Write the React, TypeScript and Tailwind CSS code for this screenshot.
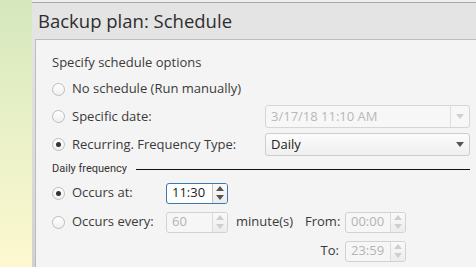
import React from "react";

const font = { fontFamily: '"Open Sans", "DejaVu Sans", sans-serif' };

function Radio({ checked }: { checked?: boolean }) {
  return (
    <span className="flex h-[13px] w-[13px] shrink-0 items-center justify-center rounded-full border border-[#bdbdbd] bg-gradient-to-b from-white to-[#efefef]">
      {checked && <span className="h-[5px] w-[5px] rounded-full bg-[#333]" />}
    </span>
  );
}

function Arrow({ up, color }: { up?: boolean; color: string }) {
  return (
    <svg width="8" height="5" viewBox="0 0 8 5" className="block">
      <path d={up ? "M0 5 L4 0 L8 5 Z" : "M0 0 L8 0 L4 5 Z"} fill={color} />
    </svg>
  );
}

function Spin({
  value,
  disabled,
  focused,
  width = "w-[62px]",
}: {
  value: string;
  disabled?: boolean;
  focused?: boolean;
  width?: string;
}) {
  const arrow = disabled ? "#cfcfcf" : "#555";
  return (
    <div
      className={`flex h-[21px] ${width} rounded-[3px] border ${
        focused ? "border-[#3a78ad]" : "border-[#d2d2d2]"
      } ${disabled ? "bg-[#f6f6f6]" : "bg-white"}`}
    >
      <div
        className={`flex flex-1 items-center pl-[5px] text-[13px] ${
          disabled ? "text-[#b4b4b4]" : "text-[#222]"
        }`}
      >
        {value}
      </div>
      <div
        className={`flex w-[15px] flex-col border-l ${
          focused ? "border-[#c4c4c4]" : "border-[#dcdcdc]"
        } bg-gradient-to-b from-[#fafafa] to-[#ececec] rounded-r-[2px]`}
      >
        <div className="flex flex-1 items-center justify-center">
          <Arrow up color={arrow} />
        </div>
        <div className="flex flex-1 items-center justify-center">
          <Arrow color={arrow} />
        </div>
      </div>
    </div>
  );
}

export default function App() {
  return (
    <div className="flex h-[267px] w-[476px] overflow-hidden text-[#3a3a3a]" style={font}>
      <div className="w-[32px] shrink-0 bg-gradient-to-b from-[#d5e7bd] via-[#eaf1c8] to-[#fdf8cf]" />
      <div className="flex flex-1 flex-col bg-[#e4e4e4]">
        <div className="h-[2px] bg-[#efefef]" />
        <div className="flex h-[37px] items-center border-t border-[#a9a9a9] pl-[6px] text-[18.5px] text-[#2e2e2e]">
          Backup plan: Schedule
        </div>
        <div className="flex flex-1">
          <div className="w-[3px] bg-gradient-to-b from-[#e4e4e4] to-[#d2d2d2]" />
          <div className="flex flex-1 flex-col border-l border-t border-[#bcbcbc] bg-[#f4f4f4] pl-[16px] pr-[6px] pt-[13px] text-[13px]">
            <div className="flex h-[20px] items-center">Specify schedule options</div>

            <div className="mt-[2px] flex h-[28px] items-center gap-[7px]">
              <Radio />
              <span>No schedule (Run manually)</span>
            </div>

            <div className="flex h-[27px] items-center">
              <div className="flex w-[213px] items-center gap-[7px]">
                <Radio />
                <span>Specific date:</span>
              </div>
              <div className="flex h-[23px] flex-1 rounded-[3px] border border-[#d6d6d6] bg-[#f7f7f7]">
                <div className="flex flex-1 items-center pl-[5px] text-[#b8b8b8]">3/17/18 11:10 AM</div>
                <div className="flex w-[19px] items-center justify-center border-l border-[#e0e0e0]">
                  <Arrow color="#d0d0d0" />
                </div>
              </div>
            </div>

            <div className="flex h-[29px] items-center">
              <div className="flex w-[213px] items-center gap-[7px]">
                <Radio checked />
                <span>Recurring. Frequency Type:</span>
              </div>
              <div className="flex h-[23px] flex-1 items-center rounded-[3px] border border-[#cdcdcd] bg-gradient-to-b from-[#fcfcfc] to-[#efefef]">
                <div className="flex-1 pl-[5px] text-[#222]">Daily</div>
                <div className="flex w-[19px] items-center justify-center">
                  <Arrow color="#555" />
                </div>
              </div>
            </div>

            <div className="flex h-[20px] items-center gap-[9px]">
              <span
                className="text-[11px] text-[#333]"
                style={{ fontFamily: '"Liberation Sans Narrow", "Roboto", sans-serif' }}
              >
                Daily frequency
              </span>
              <div className="h-px flex-1 bg-[#111]" />
            </div>

            <div className="flex h-[28px] items-center">
              <div className="flex w-[114px] items-center gap-[7px]">
                <Radio checked />
                <span>Occurs at:</span>
              </div>
              <Spin value="11:30" focused />
            </div>

            <div className="flex h-[30px] items-center">
              <div className="flex w-[114px] items-center gap-[7px]">
                <Radio />
                <span>Occurs every:</span>
              </div>
              <Spin value="60" disabled />
              <span className="ml-[8px] w-[69px]">minute(s)</span>
              <span className="w-[40px] pr-[6px] text-right">From:</span>
              <Spin value="00:00" disabled width="w-[61px]" />
            </div>

            <div className="flex h-[28px] items-center">
              <div className="w-[253px]" />
              <span className="w-[40px] pr-[6px] text-right">To:</span>
              <Spin value="23:59" disabled width="w-[61px]" />
            </div>
          </div>
        </div>
      </div>
    </div>
  );
}
